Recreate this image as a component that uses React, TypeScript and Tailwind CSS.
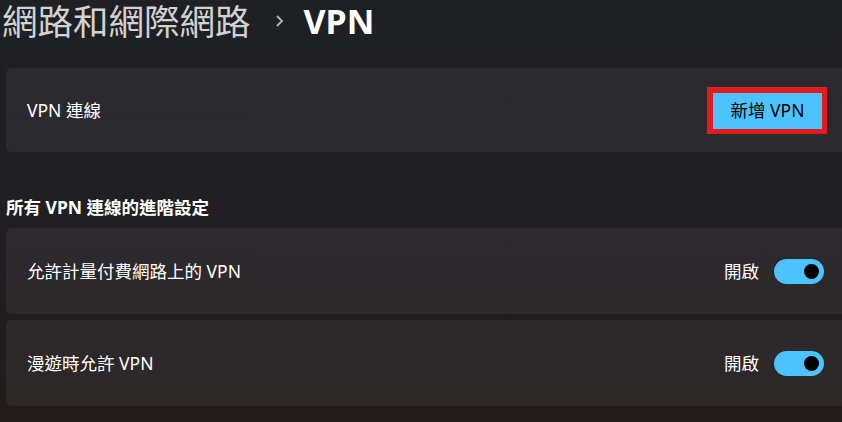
import React from "react";

const font = { fontFamily: '"Noto Sans", "Noto Sans CJK TC", sans-serif' };

function Toggle() {
  return (
    <div className="w-[50px] h-[25px] rounded-full bg-[#4cc2ff] flex items-center justify-end pr-[5px]">
      <div className="w-[15px] h-[15px] rounded-full bg-black" />
    </div>
  );
}

function ToggleCard({ label }: { label: string }) {
  return (
    <div className="h-[86px] -mr-2 rounded-[6px] bg-white/[0.05] flex items-center justify-between pl-[21px] pr-[26px]">
      <span className="text-[17.5px] text-white">{label}</span>
      <div className="flex items-center gap-[15px]">
        <span className="text-[17.5px] text-white">開啟</span>
        <Toggle />
      </div>
    </div>
  );
}

export default function App() {
  return (
    <div
      className="w-[842px] h-[422px] overflow-hidden bg-gradient-to-b from-[#1f2024] via-[#201f22] to-[#221c1c]"
      style={font}
    >
      <div className="flex items-center h-[42px] pl-[2px]">
        <span className="text-[35.5px] leading-[42px] text-[#d2d2d2]">網路和網際網路</span>
        <svg className="ml-[23px] mr-[18px]" width="12" height="16" viewBox="0 0 12 16">
          <path d="M3 3 L8 8 L3 13" fill="none" stroke="#b0b0b0" strokeWidth="2" />
        </svg>
        <span className="text-[34px] leading-[42px] font-bold text-white">VPN</span>
      </div>
      <div className="pl-[6px] mt-[26px]">
        <div className="h-[84px] -mr-2 rounded-[6px] bg-white/[0.05] flex items-center justify-between pl-[21px] pr-[23px]">
          <span className="text-[17.5px] text-white">VPN 連線</span>
          <div className="w-[120px] h-[47px] border-[6px] border-b-[5px] border-r-[5px] border-[#e31b1f] bg-[#4cc2ff] flex items-center justify-center">
            <span className="text-[17.5px] text-black">新增 VPN</span>
          </div>
        </div>
        <div className="h-[76px] flex items-end pb-[9px]">
          <span className="text-[17.5px] leading-[24px] font-bold text-white">所有 VPN 連線的進階設定</span>
        </div>
        <div className="flex flex-col gap-[6px]">
          <ToggleCard label="允許計量付費網路上的 VPN" />
          <ToggleCard label="漫遊時允許 VPN" />
        </div>
      </div>
    </div>
  );
}
